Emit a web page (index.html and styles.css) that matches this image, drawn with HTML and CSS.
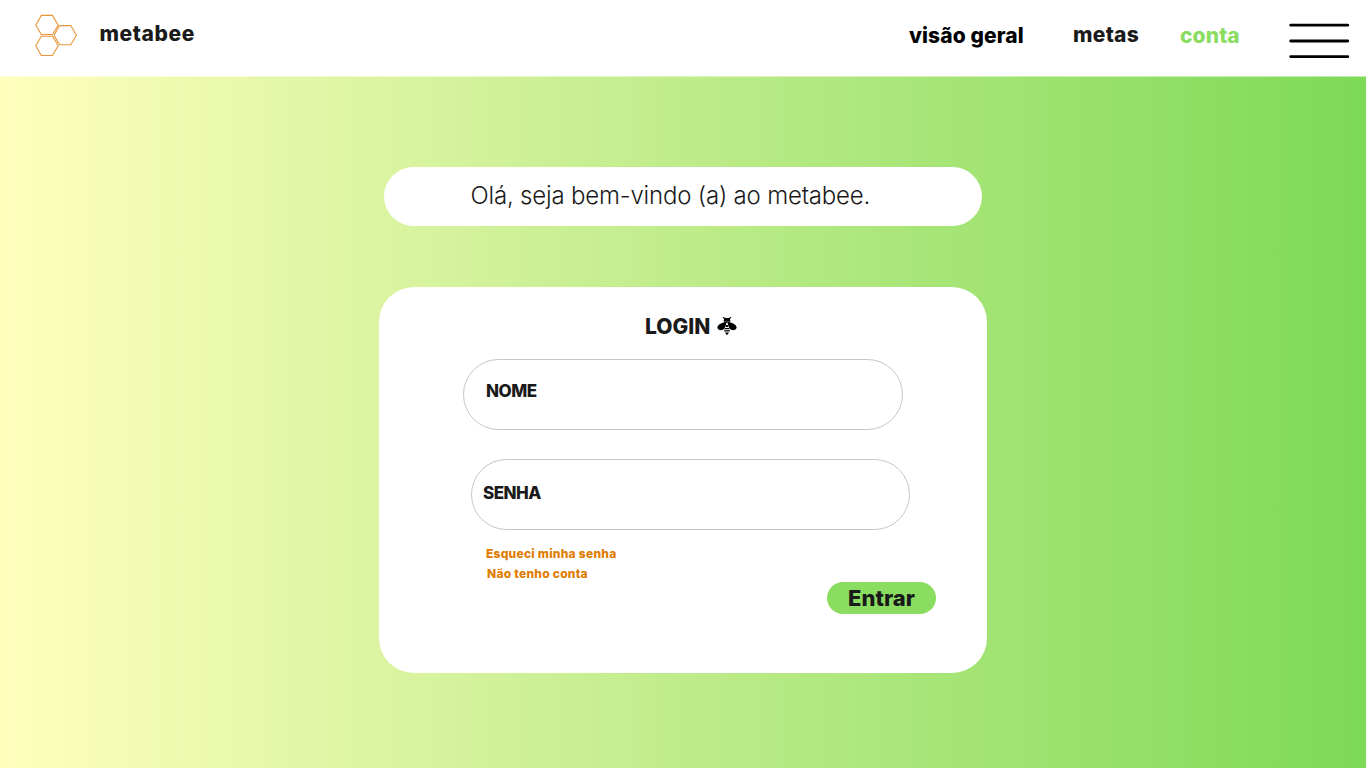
FILE: index.html
```html
<!DOCTYPE html>
<html lang="pt-BR">
<head>
<meta charset="utf-8">
<title>metabee</title>
<link rel="stylesheet" href="styles.css">
</head>
<body>
<header class="topbar">
  <a class="brand">
    <svg class="logo" width="44" height="44" viewBox="0 0 44 44" fill="none" stroke="#e8963a" stroke-width="1.1">
      <path d="M7.3 1.4h11.2l5.7 9.8-5.7 9.3H7.3L1.8 11.2z"/>
      <path d="M7.3 22.2h11.2l5.7 9.6-5.7 9.7H7.3l-5.5-9.7z"/>
      <path d="M25.6 11.6h11.2l5.6 9.7-5.6 9.4H25.6L20 21.300z"/>
    </svg>
    <span class="brand-name">metabee</span>
  </a>
  <nav class="nav">
    <a class="nav-overview">visão geral</a>
    <a class="nav-goals">metas</a>
    <a class="nav-account">conta</a>
  </nav>
  <svg class="menu" width="61" height="36" viewBox="0 0 61 36" stroke="#000" stroke-width="2.8" stroke-linecap="round">
    <path d="M1.700 2.200h57.100M1.700 18h57.100M1.700 33.700h57.100"/>
  </svg>
</header>
<main class="page">
  <p class="greeting"><span>Olá, seja bem-vindo (a) ao metabee.</span></p>
  <section class="card">
    <h1 class="title"><span>LOGIN</span>
      <svg class="bee" width="20" height="20" viewBox="0 0 20 20">
        <path d="M6.300 1l2 1.100h3.400l2-1.100.6.800-1.400 1.200.5 1.900H6.600l.5-1.900-1.400-1.200z"/>
        <path d="M6.600 5.300h6.800l-.8 1.500H7.400z"/>
        <path d="M8.200 6.300C5.200 6.300.8 8.700.5 11.200c-.2 2.800 3.200 3.700 5.500 2.600 2.200-1.100 2.900-4.400 3.400-7.200z"/>
        <path d="M11.800 6.300c3 0 7.400 2.400 7.700 4.900.2 2.800-3.200 3.700-5.500 2.600-2.200-1.100-2.900-4.400-3.400-7.200z"/>
        <path d="M9.300 9h1.400l.7 2H8.600zM7.900 12h4.200l.7 1.300H7.200zM6.900 14.200h6.200l-.5 1.400H7.400zM8 16.400h4l-2 2.800z"/>
      </svg>
    </h1>
    <div class="field field-name"><span>NOME</span></div>
    <div class="field field-password"><span>SENHA</span></div>
    <div class="links">
      <a class="forgot">Esqueci minha senha</a>
      <a class="signup">Não tenho conta</a>
    </div>
    <button class="submit"><span>Entrar</span></button>
  </section>
</main>
</body>
</html>
```
FILE: styles.css
```css
* { box-sizing: border-box; }
body {
  margin: 0;
  height: 768px;
  overflow: hidden;
  font-family: Inter, "Open Sans", sans-serif;
  font-weight: 800;
  color: #1a1a1a;
  background: linear-gradient(90deg, #ffffbe, #7ed957);
}
a, span { white-space: nowrap; }
.topbar {
  display: flex;
  align-items: flex-start;
  height: 77px;
  padding: 0 16px 0 34px;
  border-bottom: 1px solid rgba(255, 255, 255, 0.5);
  background: #fff;
  background-clip: padding-box;
  font-size: 21px;
  line-height: 26px;
  letter-spacing: 0.1px;
}
.brand { display: flex; flex: 1; }
.logo { margin-top: 14px; }
.brand-name { margin: 21px 0 0 21.500px; letter-spacing: 0.6px; }
.nav { display: flex; }
.nav a { display: block; }
.nav-overview { width: 164px; padding-top: 23px; color: #000; }
.nav-goals { width: 107px; padding-top: 22px; letter-spacing: 0.3px; }
.nav-account { width: 109px; padding-top: 23px; color: #8bdd62; }
.menu { margin-top: 23px; }
.page { display: flex; flex-direction: column; align-items: center; }
.greeting {
  width: 598px;
  height: 59px;
  margin: 90px 0 0;
  padding: 12px 0 0 86.500px;
  border-radius: 29.500px;
  background: #fff;
  font: 300 24px/33px Inter, sans-serif;
  letter-spacing: -0.19px;
}
.card {
  display: flex;
  flex-direction: column;
  align-items: flex-start;
  width: 608px;
  height: 386px;
  margin-top: 61px;
  padding-top: 25px;
  border-radius: 35px;
  background: #fff;
}
.title {
  display: flex;
  align-items: center;
  gap: 7px;
  height: 28px;
  margin: 0 0 0 266px;
  font-size: 21px;
  font-weight: 800;
}
.field {
  display: flex;
  align-items: center;
  width: 440px;
  height: 71px;
  border: 1px solid #c6c6c6;
  border-radius: 36px;
  font-size: 17px;
  letter-spacing: -0.5px;
}
.field-name { margin: 19px 0 0 84px; padding: 0 0 7px 22px; }
.field-password { width: 439px; margin: 29px 0 0 92px; padding: 0 0 3px 11px; }
.links {
  display: flex;
  flex-direction: column;
  margin: 14px 0 0 107px;
  font-size: 12px;
  line-height: 20px;
  letter-spacing: 0.25px;
  color: #e07c00;
}
.signup { padding-left: 1px; }
.submit {
  width: 109px;
  height: 32px;
  margin: -2px 0 0 448px;
  padding: 0;
  border: 0;
  border-radius: 16px;
  background: #8bdd62;
  color: #1a1a1a;
  font: 800 22px/30px Inter, sans-serif;
}
```
